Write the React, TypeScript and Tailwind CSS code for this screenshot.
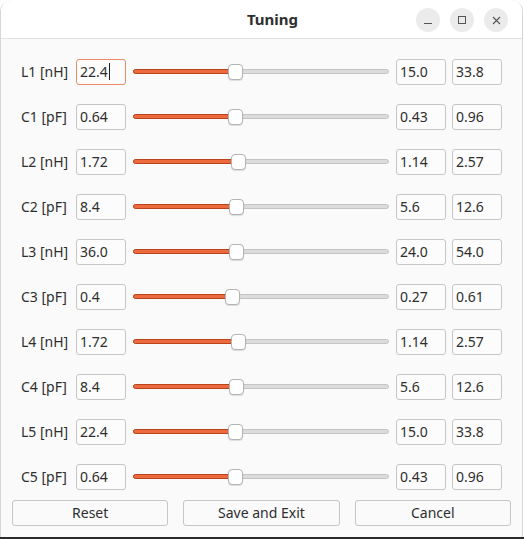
import React from "react";

type Param = { label: string; value: string; min: string; max: string };

const params: Param[] = [
  { label: "L1 [nH]", value: "22.4", min: "15.0", max: "33.8" },
  { label: "C1 [pF]", value: "0.64", min: "0.43", max: "0.96" },
  { label: "L2 [nH]", value: "1.72", min: "1.14", max: "2.57" },
  { label: "C2 [pF]", value: "8.4", min: "5.6", max: "12.6" },
  { label: "L3 [nH]", value: "36.0", min: "24.0", max: "54.0" },
  { label: "C3 [pF]", value: "0.4", min: "0.27", max: "0.61" },
  { label: "L4 [nH]", value: "1.72", min: "1.14", max: "2.57" },
  { label: "C4 [pF]", value: "8.4", min: "5.6", max: "12.6" },
  { label: "L5 [nH]", value: "22.4", min: "15.0", max: "33.8" },
  { label: "C5 [pF]", value: "0.64", min: "0.43", max: "0.96" },
];

function Field({ text, focused = false }: { text: string; focused?: boolean }) {
  return (
    <div
      className={`flex h-[26px] w-[50px] shrink-0 items-center rounded-[3px] border bg-[#fcfcfc] px-[3px] text-[#2e2e2e] ${
        focused ? "border-[#ef8a66]" : "border-[#c6c6c6]"
      }`}
    >
      {text}
      {focused && <span className="ml-[1px] h-[17px] w-[1px] bg-[#222]" />}
    </div>
  );
}

function Slider({ frac }: { frac: number }) {
  return (
    <div className="relative mx-[7px] h-[16px] flex-1">
      {/* unfilled track */}
      <div className="absolute left-0 right-0 top-[5.5px] h-[5px] rounded-full border border-[#c4c4c4] bg-[#dcdcdc]" />
      {/* filled part */}
      <div
        className="absolute left-0 top-[5.5px] h-[5px] rounded-full border border-[#b8441c] bg-[#ec6a3e]"
        style={{ width: `calc(${frac} * (100% - 15px) + 8px)` }}
      />
      <div
        className="absolute top-0 h-[16px] w-[15px] rounded-[4px] border border-[#b3b3b3] bg-white shadow-[0_1px_1px_rgba(0,0,0,0.12)]"
        style={{ left: `calc(${frac} * (100% - 15px))` }}
      />
    </div>
  );
}

export default function App() {
  return (
    <div
      className="flex h-[539px] w-[524px] flex-col bg-white text-[14px]"
      style={{ fontFamily: '"Noto Sans", "Open Sans", sans-serif' }}
    >
      <div className="flex h-[537px] w-[523px] flex-col overflow-hidden rounded-t-[12px] border-x border-[#d6d6d6] bg-[#fafafa]">
        {/* title bar */}
        <div className="relative flex h-[39px] shrink-0 items-center justify-center border-b border-[#e2e2e2] bg-white">
          <span className="ml-[22px] text-[15px] font-bold text-[#2e2e2e]">Tuning</span>
          <div className="absolute right-[14px] top-[8px] flex gap-[10px]">
            <div className="flex h-[24px] w-[24px] items-center justify-center rounded-full bg-[#ebebeb]">
              <div className="mt-[6px] h-[1px] w-[8px] bg-[#555]" />
            </div>
            <div className="flex h-[24px] w-[24px] items-center justify-center rounded-full bg-[#ebebeb]">
              <div className="h-[8px] w-[8px] border border-[#555]" />
            </div>
            <div className="flex h-[24px] w-[24px] items-center justify-center rounded-full bg-[#ebebeb]">
              <svg width="9" height="9" viewBox="0 0 9 9">
                <path d="M1 1L8 8M8 1L1 8" stroke="#555" strokeWidth="1.1" />
              </svg>
            </div>
          </div>
        </div>

        {/* parameter rows */}
        <div className="flex flex-col pt-[10px]">
          {params.map((p, i) => {
            const v = parseFloat(p.value);
            const lo = parseFloat(p.min);
            const hi = parseFloat(p.max);
            const frac = (v - lo) / (hi - lo);
            return (
              <div key={p.label} className="flex h-[45px] items-center pl-[20px] pr-[20px]">
                <span className="w-[55px] shrink-0 text-[#2e2e2e]">{p.label}</span>
                <Field text={p.value} focused={i === 0} />
                <Slider frac={frac} />
                <Field text={p.min} />
                <div className="w-[6px] shrink-0" />
                <Field text={p.max} />
              </div>
            );
          })}
        </div>

        {/* actions */}
        <div className="flex gap-[15px] px-[11px] pt-[1px]">
          {["Reset", "Save and Exit", "Cancel"].map((b) => (
            <button
              key={b}
              className="h-[26px] flex-1 rounded-[3px] border border-[#c6c6c6] bg-[#fafafa] leading-[22px] text-[#2e2e2e]"
            >
              {b}
            </button>
          ))}
        </div>
      </div>
      <div className="h-[2px] w-full bg-[#2b2b2b]" />
    </div>
  );
}
